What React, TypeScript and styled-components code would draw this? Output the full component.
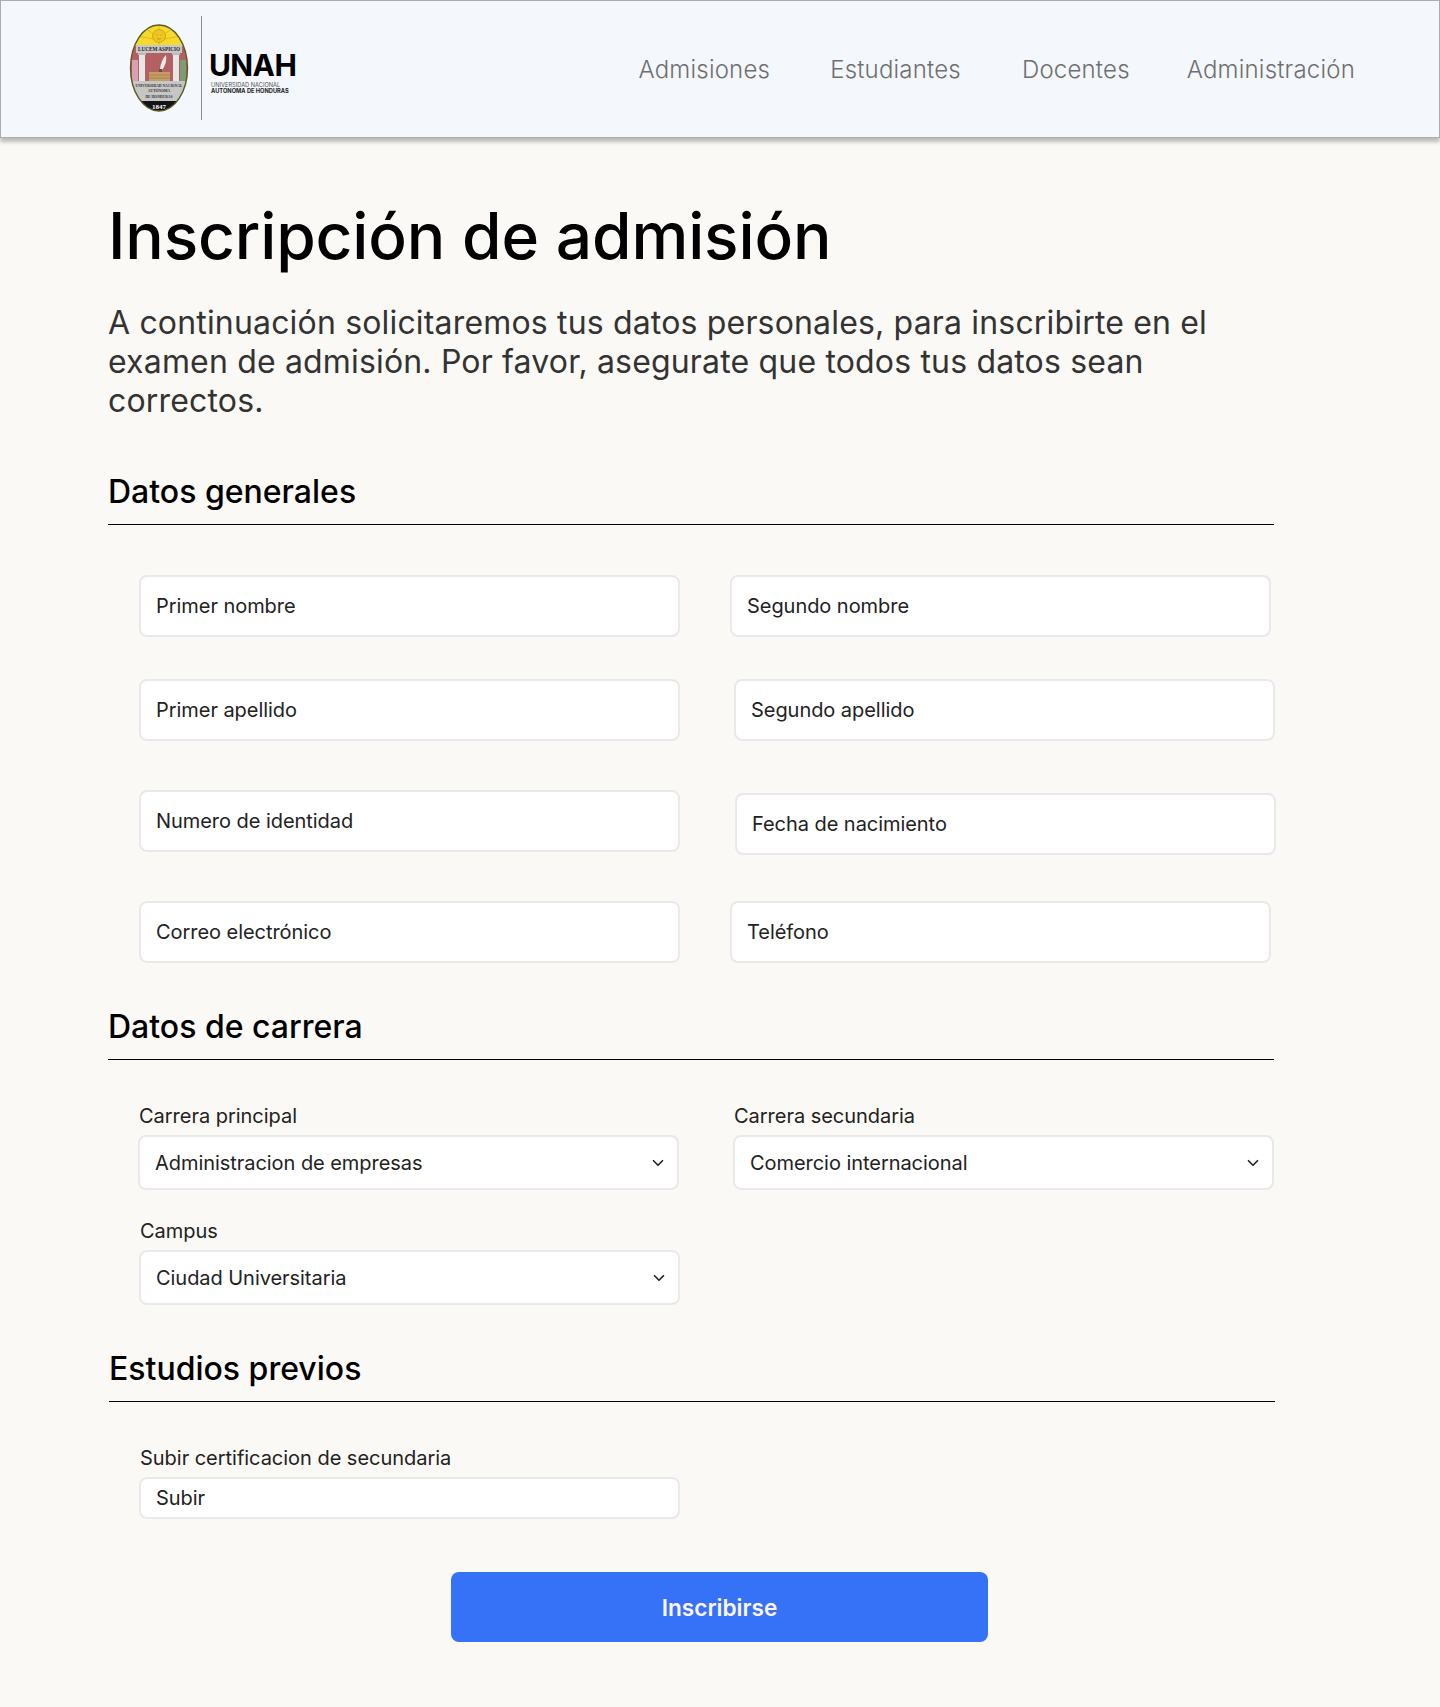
import React from "react";
import styled, { createGlobalStyle } from "styled-components";
import { ChevronDown } from "lucide-react";

const GlobalStyle = createGlobalStyle`
  * { box-sizing: border-box; }
  body {
    margin: 0;
    background: #faf9f5;
    font-family: Inter, "Liberation Sans", sans-serif;
    color: #000;
  }
`;

const SPage = styled.div`
  min-height: 1707px;
  padding-bottom: 65px;
`;

const SHeader = styled.header`
  height: 138px;
  display: flex;
  align-items: center;
  justify-content: space-between;
  padding: 0 84px 0 128px;
  background: #f4f7fc;
  border: 1px solid #ababab;
  box-shadow: 0 4px 4px rgba(0, 0, 0, 0.25);
`;

const SBrand = styled.div`
  display: flex;
  align-items: center;
  margin-top: -3px;
`;

const SDivider = styled.div`
  width: 1px;
  height: 104px;
  margin: 0 7px 0 12px;
  background: #8d8d8d;
`;

const SBrandText = styled.div`
  margin-top: 9px;
`;

const SBrandName = styled.div`
  margin-bottom: 2px;
  font-size: 30px;
  line-height: 30px;
  font-weight: 700;
  letter-spacing: -0.6px;
`;

const SBrandSub = styled.div`
  padding-left: 2px;
  font-size: 5.7px;
  line-height: 6px;
  color: #555;
  &:last-child {
    color: #222;
    font-weight: 700;
  }
`;

const SNav = styled.nav`
  display: flex;
`;

const SNavLink = styled.a<{ $left?: number }>`
  margin-left: ${(p) => p.$left ?? 0}px;
  font-size: 24px;
  font-weight: 300;
  letter-spacing: 0.2px;
  color: #6f6f6f;
`;

const SMain = styled.main`
  padding: 59px 0 0 108px;
`;

const STitle = styled.h1`
  margin: 0;
  font-size: 64px;
  line-height: 78px;
  font-weight: 500;
  letter-spacing: -0.15px;
`;

const SLead = styled.p`
  width: 1130px;
  margin: 28px 0 0;
  font-size: 32px;
  line-height: 39px;
  font-weight: 400;
  letter-spacing: 0.17px;
  color: #333;
`;

const SSection = styled.section<{ $top: number; $shift?: number }>`
  margin-top: ${(p) => p.$top}px;
  margin-left: ${(p) => p.$shift ?? 0}px;
`;

const SHeading = styled.h2`
  width: 1166px;
  margin: 0;
  padding-bottom: 13px;
  border-bottom: 1px solid #000;
  font-size: 32px;
  line-height: 39px;
  font-weight: 500;
`;

const SRow = styled.div<{ $gap?: number; $top: number; $inset?: number }>`
  display: flex;
  align-items: flex-start;
  gap: ${(p) => p.$gap ?? 50}px;
  margin-top: ${(p) => p.$top}px;
  padding-left: ${(p) => p.$inset ?? 31}px;
`;

const SField = styled.div<{ $drop?: number }>`
  width: 541px;
  margin-top: ${(p) => p.$drop ?? 0}px;
`;

const SLabel = styled.div`
  margin-bottom: 7px;
  padding-left: 1px;
  font-size: 20px;
  line-height: 24px;
  letter-spacing: -0.03px;
  color: #222;
`;

const SBox = styled.div<{ $height?: number; $select?: boolean }>`
  height: ${(p) => p.$height ?? 62}px;
  display: flex;
  align-items: center;
  justify-content: space-between;
  padding: 0 ${(p) => (p.$select ? 10 : 15)}px 0 15px;
  background: #fff;
  border: 2px solid #e9e9e9;
  border-radius: 8px;
  font-size: 20px;
  letter-spacing: -0.05px;
  color: #222;
`;

const SActions = styled.div`
  margin: 53px 0 0 343px;
`;

const SSubmit = styled.button`
  width: 537px;
  height: 70px;
  border: 0;
  border-radius: 8px;
  background: #3672f8;
  color: #fdf4f4;
  font-family: inherit;
  font-size: 22.6px;
  font-weight: 600;
`;

const serifText = {
  fontFamily: "Liberation Serif, serif",
  fontWeight: 700,
  textAnchor: "middle",
} as const;

const Crest = () => (
  <svg width="60" height="88" viewBox="0 0 60 88" role="img" aria-label="Escudo UNAH">
    <defs>
      <clipPath id="oval">
        <ellipse cx="30" cy="44" rx="28.5" ry="43" />
      </clipPath>
    </defs>
    <g clipPath="url(#oval)">
      <rect width="60" height="88" fill="#b45f63" />
      <rect width="60" height="22" fill="#f5da2c" />
      <path
        d="M30 1v20M16 4l14 10M44 4L30 14M8 12l22 4M52 12l-22 4"
        stroke="#dcb41c"
        strokeWidth="0.9"
      />
      <circle cx="30" cy="12" r="6.5" fill="#efc51f" stroke="#bd941a" strokeWidth="0.6" />
      <path d="M27.5 11h1M31.5 11h1M28 14.5c1 .8 3 .8 4 0" stroke="#a07c14" strokeWidth="0.6" fill="none" />
      <rect x="7" y="21" width="46" height="8" fill="#c8c8c8" />
      <text x="30" y="27" fontSize="5.2" fill="#222" {...serifText}>
        LUCEM ASPICIO
      </text>
      <rect x="3" y="36" width="6" height="21" fill="#d9a0b4" />
      <rect x="51" y="36" width="6" height="21" fill="#7f9a76" />
      <rect x="10" y="29" width="6" height="28" fill="#e6e6e6" />
      <rect x="44" y="29" width="6" height="28" fill="#e6e6e6" />
      <rect x="9" y="29" width="8" height="2" fill="#bbb" />
      <rect x="43" y="29" width="8" height="2" fill="#bbb" />
      <path d="M31 47c0-7 3-13 6-16 1 6-1 12-5 16z" fill="#f4eee2" />
      <rect x="30" y="45" width="3" height="4" fill="#555" />
      <rect x="20" y="48" width="21" height="9" fill="#c69c62" />
      <path d="M20 51h21M20 54h21" stroke="#8f6f42" strokeWidth="0.5" />
      <rect x="0" y="57" width="60" height="20" fill="#c6c6c6" />
      <text x="30" y="62.5" fontSize="3.7" fill="#333" {...serifText}>
        UNIVERSIDAD NACIONAL
      </text>
      <text x="30" y="68" fontSize="3.7" fill="#333" {...serifText}>
        AUTÓNOMA
      </text>
      <text x="30" y="74" fontSize="3.7" fill="#333" {...serifText}>
        DE HONDURAS
      </text>
      <rect x="0" y="77" width="60" height="11" fill="#141414" />
      <text x="30" y="85" fontSize="7" fill="#fff" {...serifText}>
        1847
      </text>
    </g>
    <ellipse cx="30" cy="44" rx="28.5" ry="43" fill="none" stroke="#5d5a22" strokeWidth="1.4" />
  </svg>
);

const Select = ({ value }: { value: string }) => (
  <SBox $height={55} $select>
    {value}
    <ChevronDown size={18} strokeWidth={2.2} color="#222" />
  </SBox>
);

export default function App() {
  return (
    <SPage>
      <GlobalStyle />
      <SHeader>
        <SBrand>
          <Crest />
          <SDivider />
          <SBrandText>
            <SBrandName>UNAH</SBrandName>
            <SBrandSub>UNIVERSIDAD NACIONAL</SBrandSub>
            <SBrandSub>AUTÓNOMA DE HONDURAS</SBrandSub>
          </SBrandText>
        </SBrand>
        <SNav>
          <SNavLink>Admisiones</SNavLink>
          <SNavLink $left={60}>Estudiantes</SNavLink>
          <SNavLink $left={61}>Docentes</SNavLink>
          <SNavLink $left={57}>Administración</SNavLink>
        </SNav>
      </SHeader>
      <SMain>
        <STitle>Inscripción de admisión</STitle>
        <SLead>
          A continuación solicitaremos tus datos personales, para inscribirte en el examen de
          admisión. Por favor, asegurate que todos tus datos sean correctos.
        </SLead>

        <SSection $top={52}>
          <SHeading>Datos generales</SHeading>
          <SRow $top={50}>
            <SField><SBox>Primer nombre</SBox></SField>
            <SField><SBox>Segundo nombre</SBox></SField>
          </SRow>
          <SRow $top={42} $gap={54}>
            <SField><SBox>Primer apellido</SBox></SField>
            <SField><SBox>Segundo apellido</SBox></SField>
          </SRow>
          <SRow $top={49} $gap={55}>
            <SField><SBox>Numero de identidad</SBox></SField>
            <SField $drop={3}><SBox>Fecha de nacimiento</SBox></SField>
          </SRow>
          <SRow $top={46}>
            <SField><SBox>Correo electrónico</SBox></SField>
            <SField><SBox>Teléfono</SBox></SField>
          </SRow>
        </SSection>

        <SSection $top={44}>
          <SHeading>Datos de carrera</SHeading>
          <SRow $top={44} $gap={54} $inset={30}>
            <SField>
              <SLabel>Carrera principal</SLabel>
              <Select value="Administracion de empresas" />
            </SField>
            <SField>
              <SLabel>Carrera secundaria</SLabel>
              <Select value="Comercio internacional" />
            </SField>
          </SRow>
          <SRow $top={29}>
            <SField>
              <SLabel>Campus</SLabel>
              <Select value="Ciudad Universitaria" />
            </SField>
          </SRow>
        </SSection>

        <SSection $top={44} $shift={1}>
          <SHeading>Estudios previos</SHeading>
          <SRow $top={44} $inset={30}>
            <SField>
              <SLabel>Subir certificacion de secundaria</SLabel>
              <SBox $height={42}>Subir</SBox>
            </SField>
          </SRow>
        </SSection>

        <SActions>
          <SSubmit>Inscribirse</SSubmit>
        </SActions>
      </SMain>
    </SPage>
  );
}
